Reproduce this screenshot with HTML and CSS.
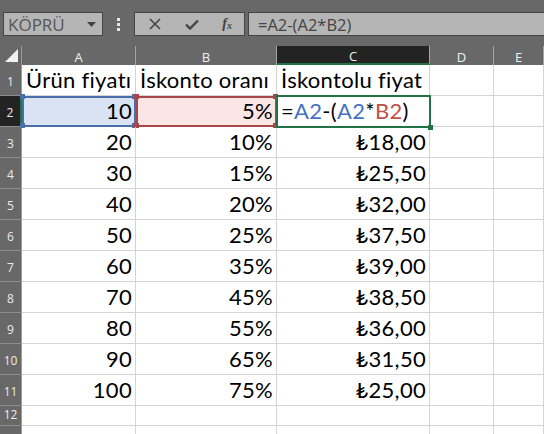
FILE: index.html
```html
<!DOCTYPE html>
<html>
<head>
<meta charset="utf-8">
<link rel="stylesheet" href="styles.css">
</head>
<body>
<div class="toolbar">
  <div class="namebox"><span>KÖPRÜ</span><svg class="arrow" width="9" height="5" viewBox="0 0 9 5"><path d="M0 0h9L4.5 5z" fill="#444"/></svg></div>
  <div class="dots"><svg width="3" height="13" viewBox="0 0 3 13"><rect x="0" y="0" width="3" height="3" fill="#e6e6e6"/><rect x="0" y="5" width="3" height="3" fill="#e6e6e6"/><rect x="0" y="10" width="3" height="3" fill="#e6e6e6"/></svg></div>
  <div class="fxbtns">
    <svg width="12" height="12" viewBox="0 0 12 12"><path d="M1 1l10 10M11 1L1 11" stroke="#444" stroke-width="1.6"/></svg>
    <svg width="14" height="11" viewBox="0 0 14 11"><path d="M1 5.5l4 4L13 1.5" stroke="#444" stroke-width="2.4" fill="none"/></svg>
    <span class="fx">f<sub>x</sub></span>
  </div>
  <div class="formula">=A2-(A2*B2)</div>
</div>
<div class="sheet">
  <div class="corner"><svg width="13" height="13" viewBox="0 0 13 13"><path d="M13 0V13H0z" fill="#f2f2f2"/></svg></div>
  <div class="ch">A</div><div class="ch">B</div><div class="ch sel">C</div><div class="ch">D</div><div class="ch">E</div>

  <div class="rh">1</div><div class="c">Ürün fiyatı</div><div class="c">İskonto oranı</div><div class="c">İskontolu fiyat</div><div class="c"></div><div class="c"></div>

  <div class="rh sel">2</div>
  <div class="c r ref-a">10<i class="k tl"></i><i class="k tr"></i><i class="k bl"></i><i class="k br"></i></div>
  <div class="c r ref-b">5%<i class="k tl"></i><i class="k tr"></i><i class="k bl"></i><i class="k br"></i></div>
  <div class="c active">=<span class="blue">A2</span>-(<span class="blue">A2</span>*<span class="red">B2</span>)<i class="k br"></i></div>
  <div class="c"></div><div class="c"></div>

  <div class="rh">3</div><div class="c r">20</div><div class="c r">10%</div><div class="c r">₺18,00</div><div class="c"></div><div class="c"></div>
  <div class="rh">4</div><div class="c r">30</div><div class="c r">15%</div><div class="c r">₺25,50</div><div class="c"></div><div class="c"></div>
  <div class="rh">5</div><div class="c r">40</div><div class="c r">20%</div><div class="c r">₺32,00</div><div class="c"></div><div class="c"></div>
  <div class="rh">6</div><div class="c r">50</div><div class="c r">25%</div><div class="c r">₺37,50</div><div class="c"></div><div class="c"></div>
  <div class="rh">7</div><div class="c r">60</div><div class="c r">35%</div><div class="c r">₺39,00</div><div class="c"></div><div class="c"></div>
  <div class="rh">8</div><div class="c r">70</div><div class="c r">45%</div><div class="c r">₺38,50</div><div class="c"></div><div class="c"></div>
  <div class="rh">9</div><div class="c r">80</div><div class="c r">55%</div><div class="c r">₺36,00</div><div class="c"></div><div class="c"></div>
  <div class="rh">10</div><div class="c r">90</div><div class="c r">65%</div><div class="c r">₺31,50</div><div class="c"></div><div class="c"></div>
  <div class="rh">11</div><div class="c r">100</div><div class="c r">75%</div><div class="c r">₺25,00</div><div class="c"></div><div class="c"></div>
  <div class="rh small">12</div><div class="c"></div><div class="c"></div><div class="c"></div><div class="c"></div><div class="c"></div>
  <div class="rh small"></div><div class="c"></div><div class="c"></div><div class="c"></div><div class="c"></div><div class="c"></div>
</div>
</body>
</html>
```
FILE: styles.css
```css
* { box-sizing: border-box; }
html, body { margin: 0; padding: 0; }
body {
  width: 544px;
  height: 434px;
  overflow: hidden;
  background: #ffffff;
  font-family: "Open Sans", "DejaVu Sans", sans-serif;
}
.toolbar {
  height: 46px;
  background: #686868;
  display: flex;
  align-items: flex-start;
  padding: 12px 0 0 3px;
}
.namebox {
  width: 100px;
  height: 24px;
  background: #b5b5b5;
  border: 1px solid #444;
  display: flex;
  align-items: center;
  justify-content: space-between;
  padding: 0 6px 0 4px;
  color: #555;
  font-size: 17px;
}
.dots {
  width: 31px;
  height: 24px;
  display: flex;
  align-items: center;
  justify-content: center;
}
.fxbtns {
  width: 111px;
  height: 24px;
  background: #b5b5b5;
  border: 1px solid #444;
  display: flex;
  align-items: center;
  justify-content: space-between;
  padding: 0 12px 0 14px;
}
.fx {
  font-family: "Liberation Serif", serif;
  font-style: italic;
  font-weight: bold;
  font-size: 14px;
  color: #444;
}
.fx sub { font-size: 10px; vertical-align: -1px; }
.formula {
  flex: 1;
  margin-left: 3px;
  height: 24px;
  background: #b5b5b5;
  border: 1px solid #444;
  border-right: none;
  display: flex;
  align-items: center;
  padding-left: 9px;
  color: #444;
  font-size: 16.5px;
}
.sheet {
  display: grid;
  grid-template-columns: 22px 114px 141px 153px 64px 50px;
  grid-template-rows: 19px repeat(11, 31px) 20px 20px;
}
.corner {
  background: #686868;
  border-right: 1px solid #9a9a9a;
  display: flex;
  align-items: flex-end;
  justify-content: flex-end;
  padding: 0 3px 3px 0;
}
.ch {
  background: #686868;
  border-right: 1px solid #a4a4a4;
  color: #f0f0f0;
  font-size: 13px;
  display: flex;
  align-items: center;
  justify-content: center;
  padding-top: 2px;
}
.ch.sel {
  background: #232323;
  border-bottom: 2px solid #217346;
}
.rh {
  background: #686868;
  border-bottom: 1px solid #8c8c8c;
  border-right: 1px solid #9a9a9a;
  color: #ececec;
  font-size: 12px;
  display: flex;
  align-items: flex-end;
  justify-content: center;
  padding-bottom: 5px;
}
.rh.small { padding-bottom: 2px; }
.rh.sel {
  background: #232323;
  border-right: 2px solid #217346;
}
.c {
  position: relative;
  border-right: 1px solid #d4d4d4;
  border-bottom: 1px solid #d4d4d4;
  font-family: "Lato", "DejaVu Sans", sans-serif;
  font-size: 22px;
  letter-spacing: 0.3px;
  line-height: 1;
  color: #000;
  display: flex;
  align-items: flex-end;
  padding: 0 3px 4px 4px;
  white-space: nowrap;
}
.c.r { justify-content: flex-end; }
.ref-a {
  background: #dae3f3;
  outline: 2px solid #4a6ea8;
  outline-offset: -2px;
}
.ref-b {
  background: #fbe5e5;
  outline: 2px solid #a8474a;
  outline-offset: -2px;
}
.active {
  outline: 2px solid #217346;
  outline-offset: -1px;
  z-index: 2;
}
.blue { color: #4472c4; }
.red { color: #c0504d; }
.k {
  position: absolute;
  width: 5px;
  height: 5px;
}
.ref-a .k { background: #4a6ea8; }
.ref-b .k { background: #a8474a; }
.active .k { background: #217346; }
.tl { left: -2px; top: -2px; }
.tr { right: -2px; top: -2px; }
.bl { left: -2px; bottom: -2px; }
.br { right: -2px; bottom: -2px; }
.active .br { right: -4px; bottom: -4px; }
```
